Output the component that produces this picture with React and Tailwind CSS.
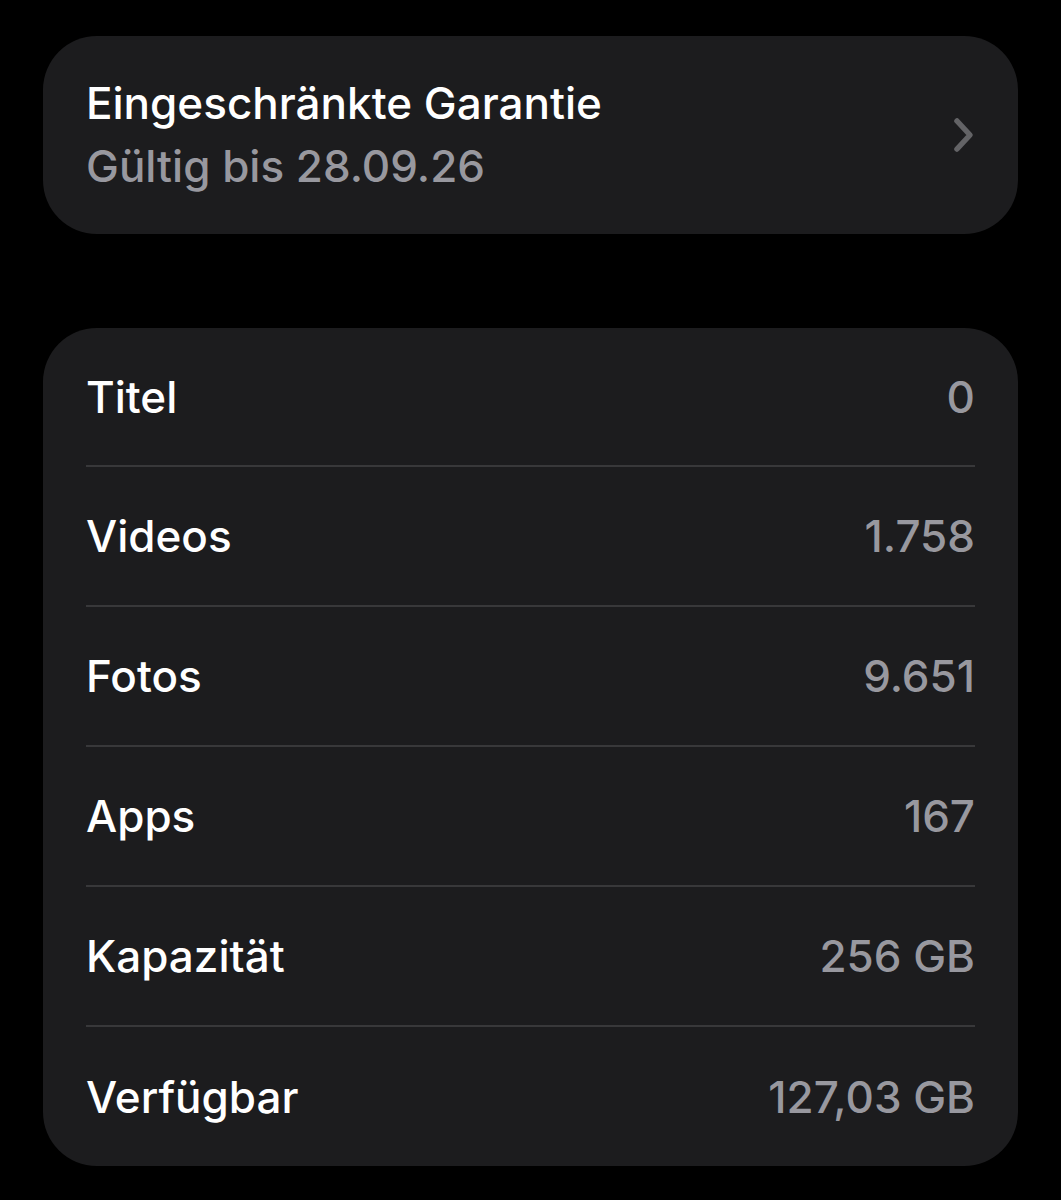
const rows = [
  { label: "Titel", value: "0" },
  { label: "Videos", value: "1.758" },
  { label: "Fotos", value: "9.651" },
  { label: "Apps", value: "167" },
  { label: "Kapazität", value: "256 GB" },
  { label: "Verfügbar", value: "127,03 GB" },
];

export default function App() {
  return (
    <div
      className="min-h-[1200px] w-full bg-black pt-[36px] px-[43px] antialiased"
      style={{ fontFamily: "Inter, 'Noto Sans', sans-serif" }}
    >
      <div className="h-[198px] rounded-[54px] bg-[#1c1c1e] pl-[43px] pr-[42px] flex items-center justify-between">
        <div className="flex flex-col">
          <span className="text-[44px] leading-[63px] font-medium text-white">
            Eingeschränkte Garantie
          </span>
          <span className="text-[44px] leading-[63px] font-medium text-[#98989f]">
            Gültig bis 28.09.26
          </span>
        </div>
        <svg width="22" height="36" viewBox="0 0 22 36" className="mr-[1px]">
          <path
            d="M4 4 L17 18 L4 32"
            fill="none"
            stroke="#636366"
            strokeWidth="5.5"
            strokeLinecap="round"
            strokeLinejoin="round"
          />
        </svg>
      </div>

      <div className="mt-[94px] rounded-[54px] bg-[#1c1c1e] pl-[43px]">
        {rows.map((row, i) => (
          <div key={row.label} className="pr-[43px]">
            <div
              className={
                "flex items-center justify-between " +
                (i === 0
                  ? "h-[137px]"
                  : i === rows.length - 1
                  ? "h-[139px]"
                  : "h-[138px]")
              }
            >
              <span className="text-[44px] font-medium text-white">
                {row.label}
              </span>
              <span className="text-[44px] font-medium text-[#98989f]">
                {row.value}
              </span>
            </div>
            {i < rows.length - 1 && <div className="h-[2px] bg-[#38383a]" />}
          </div>
        ))}
      </div>
    </div>
  );
}
